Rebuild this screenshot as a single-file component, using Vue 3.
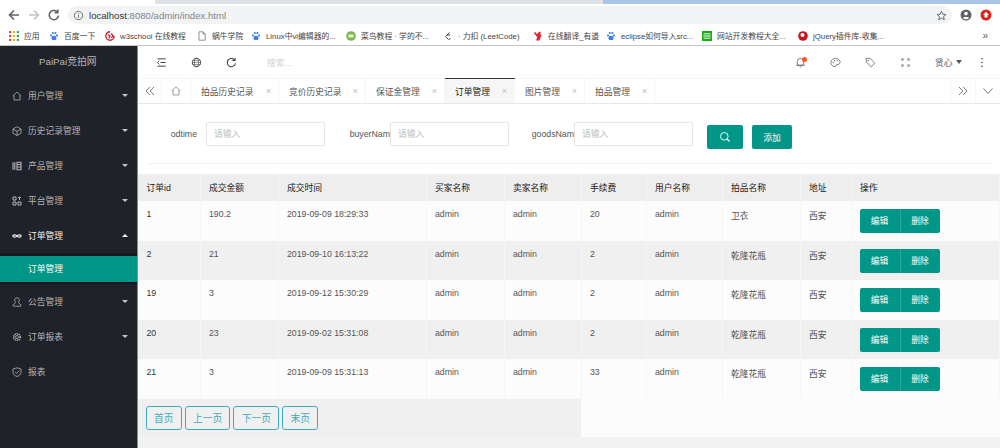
<script setup>
const bookmarks = [
  { name: '百度一下', w: 56, c: '#3b7de8', k: 'paw' },
  { name: 'w3school 在线教程', w: 92, c: '#c9252c', k: 'w3' },
  { name: '蜗牛学院', w: 54, c: '#777', k: 'doc' },
  { name: 'Linux中vi编辑器的...', w: 95, c: '#3b7de8', k: 'paw' },
  { name: '菜鸟教程 · 学的不...', w: 97, c: '#7ab648', k: 'cai' },
  { name: '· 力扣 (LeetCode)', w: 90, c: '#e8a33d', k: 'lc' },
  { name: '在线翻译_有道', w: 73, c: '#e3262e', k: 'yd' },
  { name: 'eclipse如何导入src...', w: 96, c: '#3b7de8', k: 'paw' },
  { name: '网站开发教程大全...', w: 96, c: '#1aad19', k: 'web' },
  { name: 'jQuery插件库-收集...', w: 100, c: '#c9151b', k: 'jq' }
]
const menu = [
  { name: '用户管理', icon: 'home', arrow: 'down' },
  { name: '历史记录管理', icon: 'cube', arrow: 'down' },
  { name: '产品管理', icon: 'bars', arrow: 'down' },
  { name: '平台管理', icon: 'grid', arrow: 'down' },
  { name: '订单管理', icon: 'link', arrow: 'up', open: true, sub: '订单管理' },
  { name: '公告管理', icon: 'user', arrow: 'down' },
  { name: '订单报表', icon: 'gear', arrow: 'down' },
  { name: '报表', icon: 'shield' }
]
const tabs = [
  { t: '拍品历史记录', w: 88 }, { t: '竞价历史记录', w: 87 }, { t: '保证金管理', w: 79 },
  { t: '订单管理', w: 70, active: true }, { t: '图片管理', w: 70 }, { t: '拍品管理', w: 70 }
]
const columns = [
  { t: '订单id', w: 62 }, { t: '成交金额', w: 78 }, { t: '成交时间', w: 148 }, { t: '买家名称', w: 78 },
  { t: '卖家名称', w: 77 }, { t: '手续费', w: 65 }, { t: '用户名称', w: 76 }, { t: '拍品名称', w: 78 },
  { t: '地址', w: 51 }, { t: '操作', w: 148 }
]
const orders = [
  ['1', '190.2', '2019-09-09 18:29:33', 'admin', 'admin', '20', 'admin', '卫衣', '西安'],
  ['2', '21', '2019-09-10 16:13:22', 'admin', 'admin', '2', 'admin', '乾隆花瓶', '西安'],
  ['19', '3', '2019-09-12 15:30:29', 'admin', 'admin', '2', 'admin', '乾隆花瓶', '西安'],
  ['20', '23', '2019-09-02 15:31:08', 'admin', 'admin', '2', 'admin', '乾隆花瓶', '西安'],
  ['21', '3', '2019-09-09 15:31:13', 'admin', 'admin', '33', 'admin', '乾隆花瓶', '西安']
]
const filters = [
  { label: 'odtime', cls: 'f1' },
  { label: 'buyerNam', cls: 'f2' },
  { label: 'goodsNam', cls: 'f3' }
]
const pages = ['首页', '上一页', '下一页', '末页']
</script>

<template>
  <div class="screen">
    <div class="tabstrip"><div class="strip-tab"></div><div class="strip-grey"></div><div class="strip-blue"></div></div>
    <div class="toolbar">
      <svg class="nav" viewBox="0 0 14 14"><path d="M12 7H3M7 2.5 2.5 7 7 11.5" fill="none" stroke="#5f6368" stroke-width="1.6"/></svg>
      <svg class="nav" viewBox="0 0 14 14"><path d="M2 7h9M7 2.500 11.500 7 7 11.500" fill="none" stroke="#c0c2c5" stroke-width="1.600"/></svg>
      <svg class="nav" viewBox="0 0 14 14"><path d="M11.500 7.500A4.600 4.600 0 1 1 10 3.600M10.800 1.500v3.200H7.600" fill="none" stroke="#5f6368" stroke-width="1.500"/></svg>
      <div class="omnibox">
        <svg class="info" viewBox="0 0 12 12"><circle cx="6" cy="6" r="4.500" fill="none" stroke="#5f6368"/><path d="M6 5.200v3.300M6 3.400v1" stroke="#5f6368"/></svg>
        <span class="url"><b>localhost</b>:8080/admin/index.html</span>
        <svg class="star" viewBox="0 0 12 12"><path d="M6 1.300 7.400 4.600 10.900 4.900 8.200 7.200 9 10.700 6 8.800 3 10.700 3.800 7.200 1.100 4.900 4.600 4.600Z" fill="none" stroke="#5f6368"/></svg>
      </div>
      <svg class="avatar" viewBox="0 0 12 12"><circle cx="6" cy="6" r="5.500" fill="#5f6368"/><circle cx="6" cy="4.600" r="1.800" fill="#fff"/><path d="M2.800 9c.8-1.400 5.600-1.400 6.400 0-1.800 1.600-4.600 1.600-6.400 0Z" fill="#fff"/></svg>
      <svg class="avatar ext" viewBox="0 0 12 12"><circle cx="6" cy="6" r="5.500" fill="#d9241c"/><path d="M6 2.800 9 6H7.500v2.500h-3V6H3Z" fill="#fff"/></svg>
    </div>
    <div class="bookmarks">
      <div class="bm apps">
        <svg class="bm-icon" viewBox="0 0 9 9">
          <g v-for="y in [0, 3.500, 7]" :key="y">
            <rect x="0" :y="y" width="2" height="2" fill="#e0473a"/>
            <rect x="3.500" :y="y" width="2" height="2" fill="#f3b51c"/>
            <rect x="7" :y="y" width="2" height="2" fill="#3fa757"/>
          </g>
        </svg>
        <span>应用</span>
      </div>
      <div v-for="b in bookmarks" :key="b.name" class="bm" :style="{ width: b.w + 'px' }">
        <svg class="bm-icon" viewBox="0 0 10 10">
          <g v-if="b.k === 'paw'" :fill="b.c"><ellipse cx="5" cy="7" rx="2.600" ry="2.200"/><circle cx="2" cy="4.500" r="1.100"/><circle cx="8" cy="4.500" r="1.100"/><circle cx="3.800" cy="2" r="1.100"/><circle cx="6.400" cy="2" r="1.100"/></g>
          <path v-else-if="b.k === 'w3'" d="M5 .800A4.200 4.200 0 1 0 9.200 5M3 3.500l2 1.500-1 2.500M6 2.500l2 2-1.500 2.500" fill="none" :stroke="b.c" stroke-width="1.400"/>
          <path v-else-if="b.k === 'doc'" d="M2 .800h4l2.200 2.200v6.200H2ZM6 .800V3h2.200" fill="none" :stroke="b.c" stroke-width=".8"/>
          <g v-else-if="b.k === 'cai'"><circle cx="5" cy="5" r="4.800" :fill="b.c"/><rect x="2.500" y="3.500" width="5" height="3" fill="#e8f3d8"/></g>
          <path v-else-if="b.k === 'lc'" d="M6.500 1.500 2.500 5.500l3 3M4 4l3 0M7.500 7.500l-1.500 1" fill="none" stroke="#444" stroke-width="1"/>
          <path v-else-if="b.k === 'yd'" d="M1.500 1.500 4 4.500 7 1 4 9.500M7.800 3.500 5.500 9.500" fill="none" :stroke="b.c" stroke-width="1.800"/>
          <g v-else-if="b.k === 'web'"><rect width="10" height="10" :fill="b.c"/><path d="M2 2.500h6v5H2ZM4 2.500v5M6 2.500v5M2 5h6" fill="none" stroke="#fff" stroke-width=".6"/></g>
          <g v-else><circle cx="5" cy="5" r="4.800" :fill="b.c"/><circle cx="4.500" cy="4" r="2" fill="#fff"/></g>
        </svg>
        <span>{{ b.name }}</span>
      </div>
      <span class="more">»</span>
    </div>

    <div class="app">
      <aside class="side">
        <div class="logo">PaiPai竞拍网</div>
        <template v-for="m in menu" :key="m.name">
          <div class="item" :class="{ open: m.open }">
            <svg class="mi" viewBox="0 0 10 10" fill="none" stroke="currentColor" stroke-width=".8">
              <path v-if="m.icon === 'home'" d="M.700 5 5 1l4.300 4M2 4.300V9h6V4.300"/>
              <path v-else-if="m.icon === 'cube'" d="M5 .700 9 3v4.200L5 9.500 1 7.200V3ZM1 3l4 2.300L9 3M5 5.300v4.200"/>
              <path v-else-if="m.icon === 'bars'" d="M1 1.200v7.600M2.800 1.200v7.600M5 1.200h4v7.600H5ZM5 3.500h4M5 6h4" stroke-width="1.100"/>
              <path v-else-if="m.icon === 'grid'" d="M1 1h3v3H1ZM1 6h3v3H1ZM6 6h3v3H6ZM6.200 1.500h2.600M7.500 .500v3.500" stroke-width="1"/>
              <path v-else-if="m.icon === 'link'" d="M5 5C4 3.500 1 3.300.800 5 1 6.700 4 6.500 5 5c1-1.500 4-1.700 4.200 0C9 6.700 6 6.500 5 5Z" stroke-width="1.200"/>
              <path v-else-if="m.icon === 'user'" d="M5 .800c-2 0-2.600 1.700-2.200 3.400.200.800.600 1.200.800 1.500L1 8c-.300.500 0 1.200.600 1.200h6.800c.600 0 .900-.700.600-1.200L6.400 5.700c.300-.300.600-.700.800-1.500C7.600 2.500 7 .800 5 .800Z"/>
              <g v-else-if="m.icon === 'gear'"><circle cx="5" cy="5" r="1.500"/><circle cx="5" cy="5" r="3.300" stroke-width="1.500" stroke-dasharray="1.300 .800"/></g>
              <path v-else d="M5 .800 9 2v3.300C9 7.500 7 8.800 5 9.500 3 8.800 1 7.500 1 5.300V2ZM3.200 5l1.400 1.400L7 3.800"/>
            </svg>
            <span class="mt">{{ m.name }}</span>
            <i v-if="m.arrow" class="arrow" :class="m.arrow"></i>
          </div>
          <div v-if="m.sub" class="subwrap"><div class="sub">{{ m.sub }}</div></div>
        </template>
      </aside>

      <main class="main">
        <header class="head">
          <div class="head-left">
            <svg class="hi" viewBox="0 0 12 12"><path d="M1.500 2h9M5 6h5.500M1.500 10h9M3.500 4 1.500 6l2 2" fill="none" stroke="#333"/></svg>
            <svg class="hi" viewBox="0 0 12 12"><circle cx="6" cy="6" r="4.600" fill="none" stroke="#444"/><ellipse cx="6" cy="6" rx="2.200" ry="4.600" fill="none" stroke="#444" stroke-width=".7"/><path d="M1.400 6h9.200M2 3.800h8M2 8.200h8" stroke="#444" stroke-width=".6"/></svg>
            <svg class="hi" viewBox="0 0 12 12"><path d="M10.300 6.800A4.500 4.500 0 1 1 9 2.900M9.800 1v2.800H7" fill="none" stroke="#333" stroke-width="1.100"/></svg>
            <span class="search">搜索...</span>
          </div>
          <div class="head-right">
            <span class="bell">
              <svg class="hi" viewBox="0 0 12 12"><path d="M2.500 9V5a3.500 3.500 0 0 1 7 0v4ZM1.500 9h9M5 10.800h2" fill="none" stroke="#666" stroke-width=".9"/></svg>
              <i class="dot"></i>
            </span>
            <svg class="hi" viewBox="0 0 12 12"><path d="M6 1.500C3 1.500 1 3.500 1 6c0 2.500 2 4.500 4.500 4.500 1.500 0 1-1.500 1.300-2 .500-.700 3.900.300 4.200-2.500C11.200 3.500 9 1.500 6 1.500Z" fill="none" stroke="#666" stroke-width=".9"/><circle cx="3.500" cy="6" r=".7" fill="#666"/><circle cx="5" cy="3.800" r=".7" fill="#666"/><circle cx="7.800" cy="4" r=".7" fill="#666"/></svg>
            <svg class="hi" viewBox="0 0 12 12"><path d="M1.200 1.500h4.300l5.300 5.300-4 4-5.300-5.300Z" fill="none" stroke="#666" stroke-width=".9"/><circle cx="3.500" cy="3.800" r=".8" fill="#666"/></svg>
            <svg class="hi" viewBox="0 0 12 12"><path d="M2 4.200V2h2.200M7.800 2H10v2.200M10 7.800V10H7.800M4.200 10H2V7.800M2 2l2 2M10 2 8 4M10 10 8 8M2 10l2-2" fill="none" stroke="#666" stroke-width=".8"/></svg>
            <span class="who">贤心<i class="caret"></i></span>
            <svg class="hi dots" viewBox="0 0 4 12"><circle cx="2" cy="2" r=".8" fill="#333"/><circle cx="2" cy="6" r=".8" fill="#333"/><circle cx="2" cy="10" r=".8" fill="#333"/></svg>
          </div>
        </header>

        <nav class="tabs">
          <div class="tab-btn first"><svg viewBox="0 0 10 10"><path d="M4.800 1 1 5l3.800 4M9 1 5.200 5 9 9" fill="none" stroke="#555" stroke-width=".8"/></svg></div>
          <div class="tab-btn home"><svg viewBox="0 0 10 10"><path d="M.500 5 5 .800 9.500 5M2 4v5h6V4" fill="none" stroke="#777" stroke-width=".7"/></svg></div>
          <div v-for="t in tabs" :key="t.t" class="tab" :class="{ active: t.active }" :style="{ width: t.w + 'px' }">
            <span>{{ t.t }}</span><em>×</em>
          </div>
          <div class="tabs-fill"></div>
          <div class="tab-btn edge"><svg viewBox="0 0 10 10"><path d="M1 1l3.800 4L1 9M5.200 1 9 5 5.200 9" fill="none" stroke="#555" stroke-width=".8"/></svg></div>
          <div class="tab-btn edge"><svg viewBox="0 0 10 10"><path d="M.500 2.500 5 7.500l4.500-5" fill="none" stroke="#555" stroke-width=".8"/></svg></div>
        </nav>

        <section class="filter">
          <div v-for="f in filters" :key="f.label" class="field" :class="f.cls">
            <label>{{ f.label }}</label>
            <div class="input">请输入</div>
          </div>
          <button class="btn search-btn">
            <svg viewBox="0 0 12 12"><circle cx="5.300" cy="5.300" r="3.800" fill="none" stroke="#fff" stroke-width=".9"/><path d="M8 8l2.500 2.500" stroke="#fff" stroke-width="1.300"/></svg>
          </button>
          <button class="btn add-btn">添加</button>
        </section>

        <table class="grid">
          <colgroup><col v-for="c in columns" :key="c.t" :style="{ width: c.w + 'px' }"></colgroup>
          <thead><tr><th v-for="c in columns" :key="c.t">{{ c.t }}</th></tr></thead>
          <tbody>
            <tr v-for="o in orders" :key="o[0]">
              <td v-for="(v, i) in o" :key="i">{{ v }}</td>
              <td class="ops"><div class="group"><span>编辑</span><span>删除</span></div></td>
            </tr>
          </tbody>
        </table>

        <div class="foot">
          <div class="pager">
            <button v-for="p in pages" :key="p">{{ p }}</button>
          </div>
        </div>
        <div class="rest"></div>
      </main>
    </div>
  </div>
</template>

<style>
html, body { margin: 0; padding: 0; overflow: hidden; }
</style>

<style scoped>
.screen {
  width: 1000px;
  height: 448px;
  overflow: hidden;
  display: flex;
  flex-direction: column;
  font-family: "Liberation Sans", "Noto Sans CJK SC", sans-serif;
  font-size: 8.75px;
  color: #555;
  background: #fff;
}
.tabstrip { height: 4px; display: flex; flex: none; }
.strip-tab { width: 155px; background: #fff; }
.strip-grey { width: 448px; background: #dee1e6; }
.strip-blue { flex: 1; background: #a9c6e6; }
.toolbar { height: 22px; flex: none; display: flex; align-items: center; padding-left: 7px; background: #fff; }
.nav { width: 14px; height: 14px; margin-right: 6px; }
.omnibox {
  width: 884px;
  height: 18px;
  margin-left: 1px;
  margin-right: 8px;
  border-radius: 9px;
  background: #f1f3f4;
  display: flex;
  align-items: center;
  padding-left: 5px;
  font-size: 9.6px;
  color: #80868b;
  box-sizing: border-box;
}
.info { width: 11px; height: 11px; margin-right: 5px; }
.url b { font-weight: normal; color: #333; }
.star { width: 11px; height: 11px; margin-left: auto; margin-right: 5.5px; }
.avatar { width: 12px; height: 12px; margin-right: 8px; flex: none; }
.bookmarks {
  height: 20px;
  flex: none;
  display: flex;
  align-items: center;
  padding: 0 12px 0 9px;
  background: #fff;
  border-bottom: 1px solid #c4c4c4;
  box-sizing: border-box;
  font-size: 7.8px;
  color: #444;
  white-space: nowrap;
}
.bm { display: flex; align-items: center; gap: 5px; flex: none; box-sizing: border-box; overflow: hidden; }
.bm.apps { width: 40px; }
.bm-icon { width: 10px; height: 10px; flex: none; }
.more { margin-left: auto; color: #555; font-size: 10px; }

.app { flex: 1; display: flex; min-height: 0; }
.side { width: 138px; flex: none; background: #20222a; color: #b3b4b6; border-right: 1px solid #8a8a8e; box-sizing: border-box; }
.logo { height: 32px; line-height: 31px; padding-left: 39px; font-size: 9.75px; color: #b4b5b7; }
.item { height: 35px; display: flex; align-items: center; padding-left: 12px; }
.item.open { color: #f0f0f0; }
.mi { width: 10px; height: 10px; margin-right: 6px; flex: none; }
.mt { flex: 1; }
.arrow { width: 0; height: 0; border-left: 3.5px solid transparent; border-right: 3.5px solid transparent; margin-right: 9px; }
.arrow.down { border-top: 3.5px solid #c4c5c6; }
.arrow.up { border-bottom: 3.5px solid #fff; }
.subwrap { background: #16181e; padding: 3px 0 2px; }
.sub { height: 26px; line-height: 26px; background: #009688; color: #fff; padding-left: 28px; }

.main { flex: 1; min-width: 0; display: flex; flex-direction: column; background: #fff; }
.head { height: 32px; flex: none; display: flex; align-items: center; justify-content: space-between; }
.head-left { display: flex; align-items: center; padding-left: 18px; }
.head-left .hi { margin-right: 24px; }
.hi { width: 11px; height: 11px; flex: none; display: block; }
.search { margin-left: 6px; color: #d2d2d2; }
.head-right { display: flex; align-items: center; padding-right: 16px; }
.head-right .hi { margin-right: 24px; }
.head-right .dots { margin-right: 0; width: 4px; }
.bell { position: relative; }
.dot { position: absolute; top: 0; right: 23px; width: 5px; height: 5px; border-radius: 50%; background: #ff5722; }
.who { display: inline-flex; align-items: center; color: #555; width: 28px; margin-right: 17px; margin-left: .5px; }
.caret { width: 0; height: 0; margin-left: 3px; border-left: 3.5px solid transparent; border-right: 3.5px solid transparent; border-top: 4px solid #555; }

.tabs { height: 26px; flex: none; display: flex; box-sizing: border-box; border-bottom: 1px solid #e8e8e8; border-top: 1px solid #f6f6f6; }
.tab-btn { width: 25px; display: flex; align-items: center; justify-content: center; border-right: 1px solid #f6f6f6; box-sizing: border-box; flex: none; }
.tab-btn.first { width: 24px; }
.tab-btn.home { width: 29px; }
.tab-btn svg { width: 10px; height: 10px; }
.tab-btn.edge { border-right: none; border-left: 1px solid #f6f6f6; }
.tab {
  display: flex;
  align-items: center;
  padding: 0 7px 0 10px;
  height: 100%;
  border-right: 1px solid #f6f6f6;
  box-sizing: border-box;
  flex: none;
}
.tab em { font-style: normal; color: #bbb; margin-left: auto; font-size: 9px; }
.tab.active { background: #f6f6f6; color: #222; box-shadow: 0 -1px 0 #333; }
.tabs-fill { flex: 1; }

.filter {
  height: 60px;
  flex: none;
  margin: 0 9px 10px 9px;
  box-sizing: border-box;
  padding-top: 18px;
  display: flex;
  align-items: flex-start;
  border-bottom: 1px solid #f3f3f3;
}
.field { display: flex; align-items: center; }
.field label { color: #555; text-align: right; white-space: nowrap; overflow: hidden; }
.f1 label { width: 50px; margin-right: 9px; }
.f2 label { width: 65px; }
.f3 label { width: 65px; }
.input {
  width: 119px;
  height: 24px;
  line-height: 22px;
  box-sizing: border-box;
  border: 1px solid #e6e6e6;
  border-radius: 2px;
  padding-left: 7px;
  color: #c2c2c2;
  background: #fff;
}
.btn { height: 24px; border: none; border-radius: 2px; background: #009688; color: #fff; margin-top: 3px; padding: 0; font: inherit; display: flex; align-items: center; justify-content: center; }
.search-btn { width: 36px; margin-left: 14px; }
.search-btn svg { width: 12px; height: 12px; }
.add-btn { width: 40px; margin-left: 9px; }

.grid { table-layout: fixed; width: 861px; border-collapse: collapse; flex: none; }
.grid th { height: 27px; padding: 0 0 1px 8.5px; background: #eee; font-weight: normal; color: #222; text-align: left; border-right: 1px solid #f6f6f6; box-sizing: border-box; }
.grid td { height: 39.600px; padding: 8px 0 0 8.5px; vertical-align: top; box-sizing: border-box; border-right: 1px solid #f6f6f6; color: #555; }
.grid td:first-child { color: #333; }
.grid tbody tr:nth-child(odd) td { background: #fcfcfc; }
.grid tbody tr:nth-child(even) td { background: #f0f0f0; }
.grid td.ops { padding-left: 8px; }
.group { display: inline-flex; background: #009688; border-radius: 2px; color: #fff; height: 24px; }
.group span { width: 40px; line-height: 24px; text-align: center; box-sizing: border-box; }
.group span + span { border-left: 1px solid #2ba79b; }

.foot { height: 38px; flex: none; background: #fcfcfc; }
.pager { width: 443px; height: 38px; background: #f0f0f0; display: flex; align-items: center; gap: 3px; padding-left: 7.7px; box-sizing: border-box; }
.pager button { height: 24px; padding: 0 7.25px; background: #f0f0f0; border: 1px solid #3eabbd; border-radius: 3px; color: #3eabbd; font: inherit; font-size: 9.75px; }
.rest { flex: 1; background: #f2f2f2; }
</style>
